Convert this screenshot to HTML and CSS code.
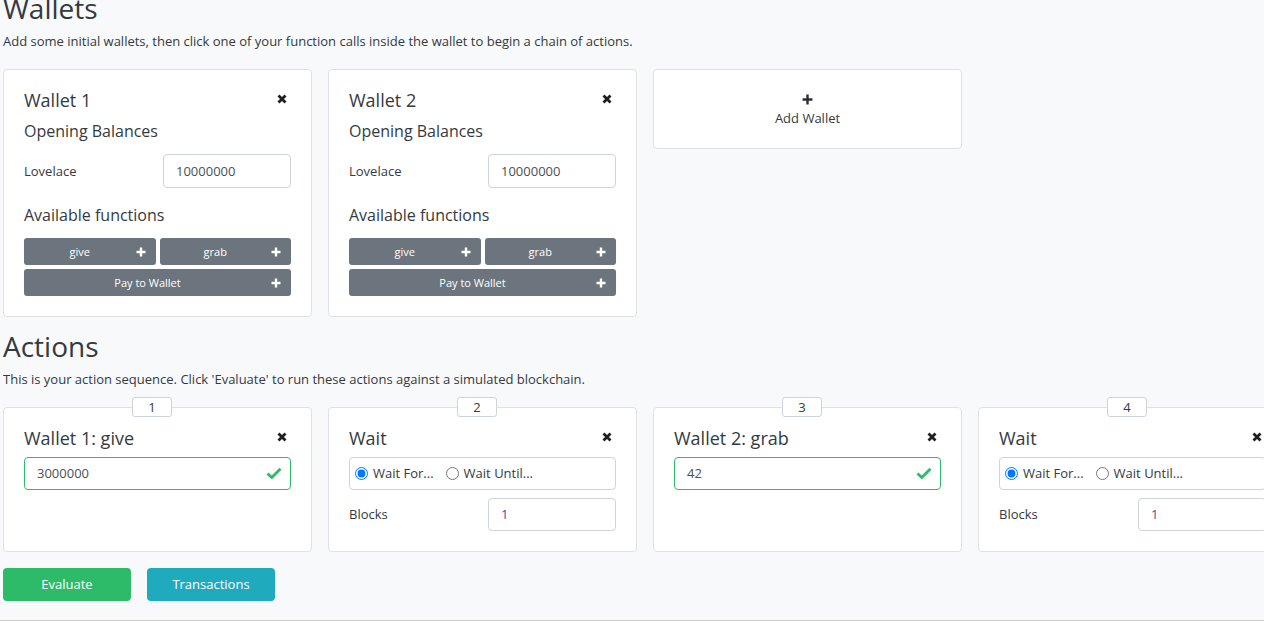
FILE: index.html
```html
<!DOCTYPE html>
<html>
<head>
<meta charset="utf-8">
<link rel="stylesheet" href="styles.css">
</head>
<body>
<div class="page">
  <section class="section">
    <h1 class="heading first">Wallets</h1>
    <p class="lead">Add some initial wallets, then click one of your function calls inside the wallet to begin a chain of actions.</p>
    <div class="row">
      <div class="card">
        <div class="card-head">
          <span class="card-title">Wallet 1</span>
          <svg class="close" viewBox="0 0 10 10"><path d="M1.5 1.5 L8.5 8.5 M8.5 1.5 L1.5 8.5"/></svg>
        </div>
        <div class="sub">Opening Balances</div>
        <div class="field">
          <span class="label">Lovelace</span>
          <input class="input small" value="10000000">
        </div>
        <div class="sub sub2">Available functions</div>
        <div class="fns">
          <button class="fn"><span class="fn-text">give</span><svg class="plus" viewBox="0 0 10 10"><path d="M5 0.5 V9.5 M0.5 5 H9.5"/></svg></button>
          <button class="fn"><span class="fn-text">grab</span><svg class="plus" viewBox="0 0 10 10"><path d="M5 0.5 V9.5 M0.5 5 H9.5"/></svg></button>
          <button class="fn wide"><span class="fn-text">Pay to Wallet</span><svg class="plus" viewBox="0 0 10 10"><path d="M5 0.5 V9.5 M0.5 5 H9.5"/></svg></button>
        </div>
      </div>
      <div class="card">
        <div class="card-head">
          <span class="card-title">Wallet 2</span>
          <svg class="close" viewBox="0 0 10 10"><path d="M1.5 1.5 L8.5 8.5 M8.5 1.5 L1.5 8.5"/></svg>
        </div>
        <div class="sub">Opening Balances</div>
        <div class="field">
          <span class="label">Lovelace</span>
          <input class="input small" value="10000000">
        </div>
        <div class="sub sub2">Available functions</div>
        <div class="fns">
          <button class="fn"><span class="fn-text">give</span><svg class="plus" viewBox="0 0 10 10"><path d="M5 0.5 V9.5 M0.5 5 H9.5"/></svg></button>
          <button class="fn"><span class="fn-text">grab</span><svg class="plus" viewBox="0 0 10 10"><path d="M5 0.5 V9.5 M0.5 5 H9.5"/></svg></button>
          <button class="fn wide"><span class="fn-text">Pay to Wallet</span><svg class="plus" viewBox="0 0 10 10"><path d="M5 0.5 V9.5 M0.5 5 H9.5"/></svg></button>
        </div>
      </div>
      <div class="card add">
        <svg class="add-plus" viewBox="0 0 10 10"><path d="M5 0.5 V9.5 M0.5 5 H9.5"/></svg>
        <span class="add-text">Add Wallet</span>
      </div>
    </div>
  </section>

  <section class="section">
    <h1 class="heading">Actions</h1>
    <p class="lead">This is your action sequence. Click 'Evaluate' to run these actions against a simulated blockchain.</p>
    <div class="row actions">
      <div class="card action">
        <span class="badge">1</span>
        <div class="card-head">
          <span class="card-title">Wallet 1: give</span>
          <svg class="close" viewBox="0 0 10 10"><path d="M1.5 1.5 L8.5 8.5 M8.5 1.5 L1.5 8.5"/></svg>
        </div>
        <div class="valid">
          <input class="valid-input" value="3000000">
          <svg class="check" viewBox="0 0 16 12"><path d="M1.5 6.5 L5.8 10.5 L14.5 1.8"/></svg>
        </div>
      </div>
      <div class="card action">
        <span class="badge">2</span>
        <div class="card-head">
          <span class="card-title">Wait</span>
          <svg class="close" viewBox="0 0 10 10"><path d="M1.5 1.5 L8.5 8.5 M8.5 1.5 L1.5 8.5"/></svg>
        </div>
        <div class="radios">
          <label class="radio"><input type="radio" name="w2" checked> Wait For...</label>
          <label class="radio"><input type="radio" name="w2"> Wait Until...</label>
        </div>
        <div class="field field2">
          <span class="label">Blocks</span>
          <input class="input small blk" value="1">
        </div>
      </div>
      <div class="card action">
        <span class="badge">3</span>
        <div class="card-head">
          <span class="card-title">Wallet 2: grab</span>
          <svg class="close" viewBox="0 0 10 10"><path d="M1.5 1.5 L8.5 8.5 M8.5 1.5 L1.5 8.5"/></svg>
        </div>
        <div class="valid">
          <input class="valid-input" value="42">
          <svg class="check" viewBox="0 0 16 12"><path d="M1.5 6.5 L5.8 10.5 L14.5 1.8"/></svg>
        </div>
      </div>
      <div class="card action">
        <span class="badge">4</span>
        <div class="card-head">
          <span class="card-title">Wait</span>
          <svg class="close" viewBox="0 0 10 10"><path d="M1.5 1.5 L8.5 8.5 M8.5 1.5 L1.5 8.5"/></svg>
        </div>
        <div class="radios">
          <label class="radio"><input type="radio" name="w4" checked> Wait For...</label>
          <label class="radio"><input type="radio" name="w4"> Wait Until...</label>
        </div>
        <div class="field field2">
          <span class="label">Blocks</span>
          <input class="input small blk" value="1">
        </div>
      </div>
    </div>
    <div class="bottom">
      <button class="btn success">Evaluate</button>
      <button class="btn info">Transactions</button>
    </div>
  </section>
</div>
<footer class="footer"></footer>
</body>
</html>
```

FILE: styles.css
```css
html, body {
  margin: 0;
  padding: 0;
  overflow: hidden;
}
body {
  background: #f8f9fa;
  font-family: "Open Sans", "Liberation Sans", sans-serif;
  color: #343a40;
  width: 1264px;
  height: 631px;
  display: flex;
  flex-direction: column;
}
.page {
  padding-left: 3px;
  height: 620px;
  overflow: hidden;
}
.heading {
  font-size: 28px;
  font-weight: 400;
  line-height: 1.2;
  margin: 13px 0 6px 0;
  color: #343a40;
}
.heading.first {
  margin-top: -8px;
}
.lead {
  font-size: 13px;
  line-height: 19.5px;
  margin: 0 0 18px 0;
}
.row {
  display: flex;
  gap: 16px;
  align-items: flex-start;
}
.row.actions {
  align-items: stretch;
}
.card {
  box-sizing: border-box;
  width: 309px;
  flex-shrink: 0;
  background: #fff;
  border: 1px solid #dee2e6;
  border-radius: 4px;
  padding: 20px;
}
.card-head {
  display: flex;
  justify-content: space-between;
  align-items: flex-start;
}
.card-title {
  font-size: 18px;
  line-height: 21.6px;
}
.close {
  width: 10px;
  height: 10px;
  margin-top: 4px;
  margin-right: 4px;
  fill: none;
  stroke: #1d1f21;
  stroke-width: 2.8;
}
.sub {
  font-size: 16px;
  line-height: 19.2px;
  margin-top: 10px;
}
.sub2 {
  margin-top: 18px;
}
.field {
  display: flex;
  justify-content: space-between;
  align-items: center;
  margin-top: 13px;
}
.field2 {
  margin-top: 8px;
}
.label {
  font-size: 13px;
}
.input {
  box-sizing: border-box;
  font-family: "Open Sans", "Liberation Sans", sans-serif;
  font-size: 13px;
  color: #495057;
  border: 1px solid #ced4da;
  border-radius: 4px;
  background: #fff;
  padding: 0 12px;
  outline: none;
}
.input.small {
  width: 128px;
  height: 34px;
}
.input.blk {
  height: 33px;
  color: #6a3f86;
}
.fns {
  display: grid;
  grid-template-columns: 1fr 1fr;
  gap: 4px;
  margin-top: 13px;
}
.fn {
  display: flex;
  align-items: center;
  height: 27px;
  border: none;
  border-radius: 3px;
  background: #6c757d;
  color: #fff;
  font-family: "Open Sans", "Liberation Sans", sans-serif;
  font-size: 11px;
  padding: 0 10px 0 0;
}
.fn.wide {
  grid-column: 1 / 3;
}
.fn-text {
  flex: 1;
  text-align: center;
}
.plus {
  width: 10px;
  height: 10px;
  fill: none;
  stroke: #fff;
  stroke-width: 2.4;
}
.card.add {
  height: 80px;
  padding: 0;
  display: flex;
  flex-direction: column;
  align-items: center;
  justify-content: center;
}
.add-plus {
  width: 11px;
  height: 11px;
  fill: none;
  stroke: #2b2f33;
  stroke-width: 2.2;
  margin-top: 2px;
}
.add-text {
  font-size: 13px;
  line-height: 18px;
  margin-top: 4px;
}
.action {
  position: relative;
}
.badge {
  position: absolute;
  left: 128px;
  top: -11px;
  box-sizing: border-box;
  width: 40px;
  height: 20px;
  background: #fff;
  border: 1px solid #ced4da;
  border-radius: 3px;
  font-size: 13px;
  line-height: 18px;
  text-align: center;
}
.valid {
  display: flex;
  align-items: center;
  box-sizing: border-box;
  height: 33px;
  margin-top: 7px;
  border: 1px solid #2dba6b;
  border-radius: 4px;
  background: #fff;
  padding: 0 8px 0 12px;
}
.valid-input {
  flex: 1;
  min-width: 0;
  border: none;
  outline: none;
  padding: 0;
  font-family: "Open Sans", "Liberation Sans", sans-serif;
  font-size: 13px;
  color: #495057;
  background: transparent;
}
.check {
  width: 16px;
  height: 12px;
  fill: none;
  stroke: #2dba6b;
  stroke-width: 2.8;
}
.radios {
  display: flex;
  align-items: center;
  gap: 12px;
  box-sizing: border-box;
  height: 33px;
  margin-top: 7px;
  border: 1px solid #ced4da;
  border-radius: 4px;
  padding: 0 5px;
}
.radio {
  display: flex;
  align-items: center;
  font-size: 13px;
  gap: 5px;
}
.radio input {
  margin: 0;
  width: 13px;
  height: 13px;
}
.bottom {
  display: flex;
  gap: 16px;
  margin-top: 16px;
}
.btn {
  width: 128px;
  height: 33px;
  border: none;
  border-radius: 4px;
  color: #fff;
  font-family: "Open Sans", "Liberation Sans", sans-serif;
  font-size: 13px;
}
.btn.success {
  background: #2dbb6a;
}
.btn.info {
  background: #1fabbd;
}
.footer {
  flex: 1;
  background: #fff;
  border-top: 1px solid #cfcfcf;
}
```
